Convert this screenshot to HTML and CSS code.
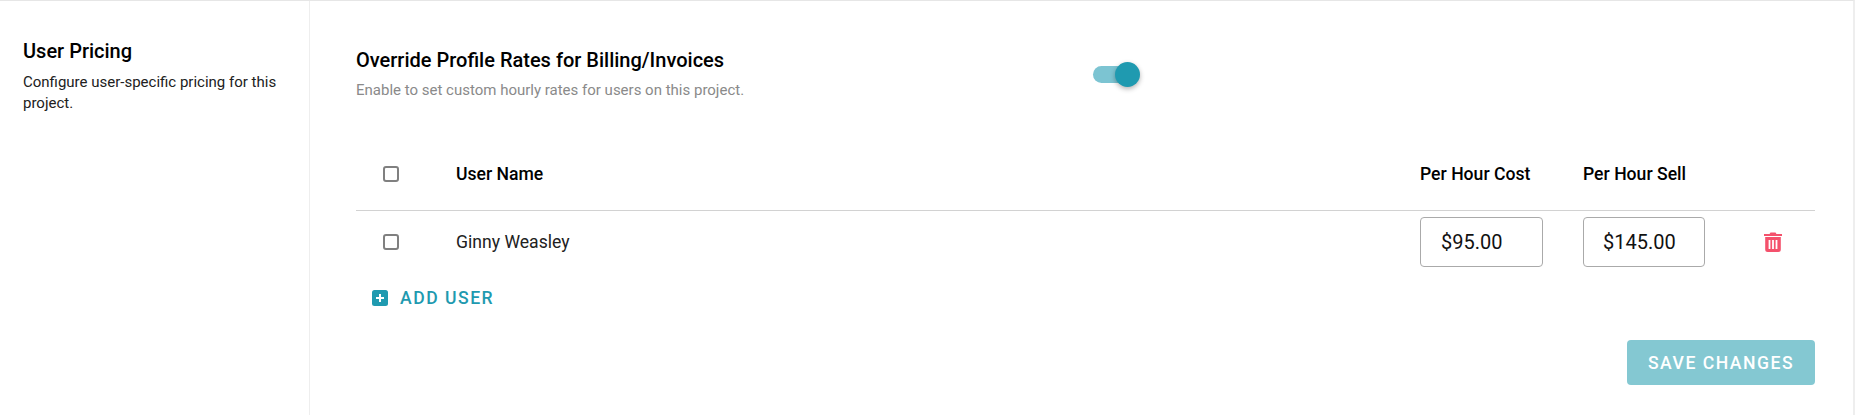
FILE: index.html
```html
<!doctype html>
<html lang="en">
<head>
    <meta charset="UTF-8">
    <title>User Pricing</title>
    <link rel="stylesheet" href="styles.css">
</head>
<body>
<div class="wrap">
    <div class="side">
        <h2 class="side-title">User Pricing</h2>
        <p class="side-info">Configure user-specific pricing for this project.</p>
    </div>
    <div class="main">
        <div class="override">
            <div class="override-text">
                <h3 class="override-title">Override Profile Rates for Billing/Invoices</h3>
                <p class="override-info">Enable to set custom hourly rates for users on this project.</p>
            </div>
            <div class="switch">
                <span class="switch-track"></span>
                <span class="switch-thumb"></span>
            </div>
        </div>
        <div class="row row-head">
            <div class="cell-check"><span class="check"></span></div>
            <div class="cell-name">User Name</div>
            <div class="cell-cost">Per Hour Cost</div>
            <div class="cell-sell">Per Hour Sell</div>
            <div class="cell-del"></div>
        </div>
        <div class="row row-user">
            <div class="cell-check"><span class="check"></span></div>
            <div class="cell-name">Ginny Weasley</div>
            <div class="cell-cost"><input class="rate" type="text" value="$95.00"></div>
            <div class="cell-sell"><input class="rate rate-sell" type="text" value="$145.00"></div>
            <div class="cell-del">
                <svg class="trash" viewBox="0 0 18 20" width="18" height="20">
                    <path fill="#f4516c" d="M6.5 0.5h5l1 1.5h5.500v2H0V2h5.500z"/>
                    <path fill="#f4516c" fill-rule="evenodd" d="M1.200 5h15.600v12.500a2.500 2.500 0 0 1-2.500 2.500H3.700a2.500 2.500 0 0 1-2.500-2.500zM4.600 8v9h1.800V8zM8.100 8v9h1.800V8zM11.600 8v9h1.800V8z"/>
                </svg>
            </div>
        </div>
        <div class="add-user">
            <svg class="add-icon" viewBox="0 0 16 16" width="16" height="16">
                <rect width="16" height="16" rx="2.500" fill="#1f9ab0"/>
                <path fill="#fff" d="M7 4h2v3h3v2H9v3H7V9H4V7h3z"/>
            </svg>
            <span class="add-label">ADD USER</span>
        </div>
        <div class="actions">
            <button class="save" type="button">SAVE CHANGES</button>
        </div>
    </div>
</div>
</body>
</html>
```

FILE: styles.css
```css
* {
    box-sizing: border-box;
}
body {
    margin: 0;
    padding: 0;
    font-family: Roboto, "Liberation Sans", sans-serif;
    color: #111;
    background: #fff;
}
.wrap {
    display: flex;
    height: 415px;
    border-top: 1px solid #e6e6e6;
    border-right: 2px solid #eeeeee;
}
.side {
    width: 310px;
    flex: none;
    padding: 39px 23px 0;
    border-right: 1px solid #eeeeee;
}
.side-title {
    margin: 0;
    font-size: 20px;
    line-height: 22px;
    font-weight: 500;
    color: #000;
}
.side-info {
    margin: 10px 0 0;
    font-size: 15px;
    line-height: 21px;
    color: #212121;
}
.main {
    flex: 1;
    padding: 0 38px 0 46px;
}
.override {
    display: flex;
    height: 149px;
    padding-top: 47px;
}
.override-text {
    width: 737px;
}
.override-title {
    margin: 0;
    font-size: 20px;
    line-height: 24px;
    font-weight: 500;
    color: #000;
}
.override-info {
    margin: 8px 0 0;
    font-size: 15px;
    line-height: 20px;
    color: #8a8a8a;
}
.switch {
    position: relative;
    width: 48px;
    height: 25px;
    margin-top: 14px;
}
.switch-track {
    display: block;
    width: 42px;
    height: 17px;
    margin-top: 4px;
    border-radius: 9px;
    background: #7cc4d2;
}
.switch-thumb {
    position: absolute;
    top: 0;
    left: 22px;
    width: 25px;
    height: 25px;
    border-radius: 50%;
    background: #1f9ab0;
    box-shadow: 0 2px 5px rgba(0, 0, 0, 0.3);
}
.row {
    display: flex;
    align-items: center;
}
.row-head {
    height: 61px;
    padding-bottom: 12px;
    border-bottom: 1px solid #d2d2d2;
    font-size: 17.6px;
    font-weight: 500;
    color: #000;
}
.row-user {
    height: 62px;
    font-size: 17.6px;
    color: #212121;
}
.cell-check {
    width: 100px;
    padding-left: 27px;
    display: flex;
}
.check {
    width: 16px;
    height: 16px;
    border: 2px solid #808080;
    border-radius: 3px;
}
.cell-name {
    flex: 1;
}
.cell-cost {
    width: 163px;
}
.cell-sell {
    width: 181px;
}
.cell-del {
    width: 51px;
    display: flex;
}
.rate {
    display: block;
    width: 123px;
    height: 50px;
    padding: 0 20px;
    border: 1px solid #aaaaaa;
    border-radius: 4px;
    font-family: inherit;
    font-size: 20px;
    color: #111;
    outline: none;
}
.rate-sell {
    width: 122px;
    padding-left: 19px;
}
.add-user {
    display: flex;
    align-items: center;
    height: 40px;
    margin-top: 5px;
    padding-left: 16px;
}
.add-label {
    margin-left: 12px;
    font-size: 17.6px;
    font-weight: 500;
    letter-spacing: 1.5px;
    color: #1f9ab0;
}
.actions {
    display: flex;
    justify-content: flex-end;
    margin-top: 22px;
}
.save {
    width: 188px;
    height: 45px;
    border: 0;
    border-radius: 4px;
    background: #84c8d2;
    color: #fff;
    font-family: inherit;
    font-size: 17.6px;
    font-weight: 500;
    letter-spacing: 1.5px;
}
```
